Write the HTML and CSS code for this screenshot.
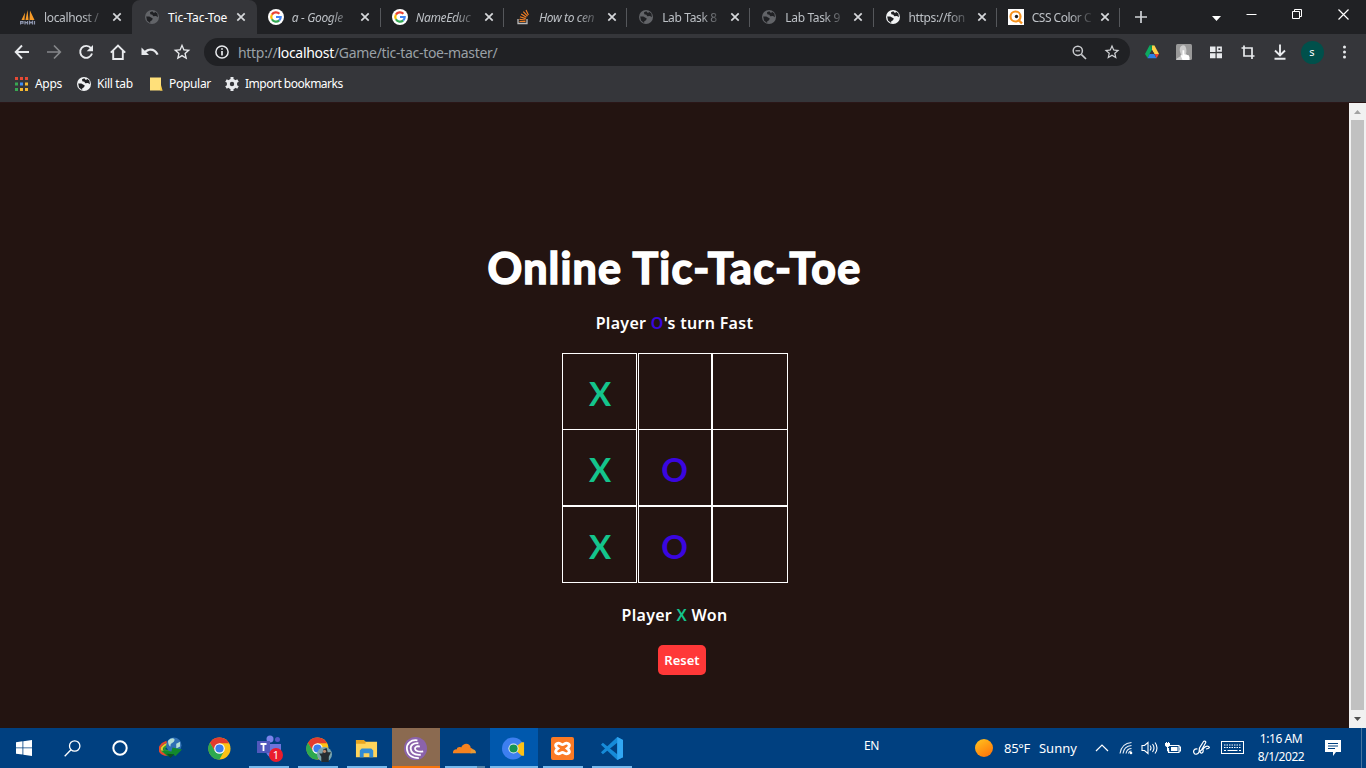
FILE: index.html
```html
<!DOCTYPE html>
<html lang="en">
<head>
<meta charset="utf-8">
<title>Tic-Tac-Toe</title>
<link rel="stylesheet" href="styles.css">
</head>
<body>
<svg class="defs" aria-hidden="true">
  <symbol id="globe" viewBox="0 0 16 16"><circle cx="8" cy="8" r="7" fill="currentColor"/><path d="M2.2 7.4 5.3 7.6 8.8 9.6 8 11.3 6.3 12.2 6.1 13.9 3 11.5ZM8.3 2.2 6 3.2 6.3 5.3 8.4 5.7 9.2 7.3 12 7.1 13.9 8.3 13.4 4.6 11 2.7 10.1 4.3Z" fill="var(--land)"/></symbol>
  <symbol id="google" viewBox="0 0 16 16"><circle cx="8" cy="8" r="8" fill="#fff"/><g fill="none" stroke-width="2.2"><path d="M3.9 5.6A4.7 4.7 0 0 1 11.4 4.8" stroke="#ea4335"/><path d="M3.9 10.3a4.7 4.7 0 0 1 0-4.7" stroke="#fbbc05"/><path d="M11.2 11.4a4.7 4.7 0 0 1-7.3-1.1" stroke="#34a853"/><path d="M8 8h4.7a4.7 4.7 0 0 1-1.5 3.4" stroke="#4285f4"/></g></symbol>
  <symbol id="close" viewBox="0 0 10 10"><path d="m1.3 1.3 7.4 7.4m0-7.4-7.4 7.4" stroke="currentColor" stroke-width="1.7"/></symbol>
  <symbol id="star" viewBox="0 0 24 24"><path d="m22 9.2-7.2-.6L12 2 9.200 8.600 2 9.200l5.500 4.800-1.700 7L12 17.300l6.200 3.700-1.600-7ZM12 15.400l-3.800 2.300 1-4.300-3.300-2.900 4.400-.4L12 6.100l1.700 4 4.400.4-3.300 2.900 1 4.300Z" fill="currentColor"/></symbol>
  <symbol id="chrome" viewBox="0 0 24 24"><circle cx="12" cy="12" r="11.500" fill="#fbc116"/><path d="M2 6A11.500 11.500 0 0 1 22 6.500H12L7.200 14.800Z" fill="#e33b2e"/><path d="M2 6A11.500 11.500 0 0 0 12 23.500l4.800-8.800H7.200Z" fill="#2da94f"/><circle cx="12" cy="12" r="5.500" fill="#fff"/><circle cx="12" cy="12" r="4.300" fill="#3b7ded"/></symbol>
</svg>

<header class="browser">
  <div class="tabstrip">
    <div class="tab first">
      <svg class="fav" viewBox="0 0 16 16"><path d="M1.500 11 5 3.500 4.500 11ZM5.500 11 7.500 1l1 10ZM9.500 11 10 1.500 14.500 11Z" fill="#f89c28"/><path d="M.5 12v3.500M.5 12.500h2.500v1.700H.5M5 12v3.500M5 13.700h2.500M7.500 12v3.500M9.500 15.500V12.500l1.500 1.500 1.500-1.500v3M14.500 12v3.500" fill="none" stroke="#8d95ad" stroke-width="1.200"/></svg>
      <span class="title">localhost /</span><svg class="x"><use href="#close"/></svg>
    </div>
    <div class="tab active">
      <svg class="fav dim"><use href="#globe"/></svg>
      <span class="title full">Tic-Tac-Toe</span><svg class="x"><use href="#close"/></svg>
    </div>
    <div class="tab">
      <svg class="fav"><use href="#google"/></svg>
      <span class="title it">a - Google</span><svg class="x"><use href="#close"/></svg>
    </div>
    <div class="tab sep">
      <svg class="fav"><use href="#google"/></svg>
      <span class="title it">NameEduc</span><svg class="x"><use href="#close"/></svg>
    </div>
    <div class="tab sep">
      <svg class="fav" viewBox="0 0 16 16"><path d="M3 10v4.500h9V10" fill="none" stroke="#bcbbbb" stroke-width="1.300"/><path d="M4.500 12.500h6M4.500 10.300l6 .7M5 7.800l5.700 1.800M6.200 5l5.200 3.200M8.300 2.700l4.200 4.500M11 1l2.400 5" stroke="#f48024" stroke-width="1.200"/></svg>
      <span class="title it">How to cen</span><svg class="x"><use href="#close"/></svg>
    </div>
    <div class="tab sep">
      <svg class="fav dim"><use href="#globe"/></svg>
      <span class="title">Lab Task 8</span><svg class="x"><use href="#close"/></svg>
    </div>
    <div class="tab sep">
      <svg class="fav dim"><use href="#globe"/></svg>
      <span class="title">Lab Task 9</span><svg class="x"><use href="#close"/></svg>
    </div>
    <div class="tab sep">
      <svg class="fav light"><use href="#globe"/></svg>
      <span class="title">https://fon</span><svg class="x"><use href="#close"/></svg>
    </div>
    <div class="tab sep">
      <svg class="fav" viewBox="0 0 16 16"><path d="M0 0h16v16H0z" fill="#fff"/><circle cx="7.500" cy="7.500" r="5" fill="none" stroke="#f7931e" stroke-width="2.200"/><path d="m10 10.500 4 4" stroke="#f7931e" stroke-width="2.400"/><circle cx="8.500" cy="7.500" r="1.700" fill="#222"/></svg>
      <span class="title css">CSS Color C</span><svg class="x"><use href="#close"/></svg>
    </div>
    <div class="newtab sep"><svg width="12" height="12" viewBox="0 0 12 12"><path d="M6 0v12M0 6h12" stroke="#d0d3d6" stroke-width="1.700"/></svg></div>
    <div class="winctl">
      <svg class="arrow" width="9" height="5" viewBox="0 0 9 5"><path d="M0 0h9L4.500 5Z" fill="#fff"/></svg>
      <svg width="11" height="11" viewBox="0 0 11 11"><path d="M.5 5.500h10" stroke="#fff"/></svg>
      <svg width="11" height="11" viewBox="0 0 11 11" fill="none" stroke="#fff"><path d="M.5 2.500h7v7h-7ZM2.500 2.500v-2h7v7h-2"/></svg>
      <svg width="11" height="11" viewBox="0 0 11 11"><path d="m.5.5 10 10m0-10-10 10" stroke="#fff" stroke-width="1.200"/></svg>
    </div>
  </div>

  <div class="toolbar">
    <span class="tool"><svg viewBox="0 0 16 16"><path d="M15 8H2M8 1.500 1.700 8 8 14.500" fill="none" stroke="currentColor" stroke-width="1.900"/></svg></span>
    <span class="tool off"><svg viewBox="0 0 16 16"><path d="M1 8h13M8 1.500 14.300 8 8 14.500" fill="none" stroke="currentColor" stroke-width="1.700"/></svg></span>
    <span class="tool"><svg viewBox="0 0 16 16"><path d="M13 4.200A6 6 0 1 0 14 9.500" fill="none" stroke="currentColor" stroke-width="1.900"/><path d="M15 1v6.300H8.700Z" fill="currentColor"/></svg></span>
    <span class="tool"><svg viewBox="0 0 16 16"><path d="M.8 8.700 8 1.500l7.200 7.200M3.200 7v8h9.600V7" fill="none" stroke="currentColor" stroke-width="1.900"/></svg></span>
    <span class="tool wide"><svg viewBox="0 0 18 16"><path d="M.5 3.500V11H8L5.300 8.300C9 5.300 13.500 6.500 15.600 11l2-.7C15 4.300 8.600 2.800 3.800 6.800Z" fill="currentColor"/></svg></span>
    <span class="tool star"><svg><use href="#star"/></svg></span>
    <div class="omnibox">
      <svg width="14" height="14" viewBox="0 0 14 14"><circle cx="7" cy="7" r="6.100" fill="none" stroke="#e8eaed" stroke-width="1.500"/><path d="M7 6v4.500M7 3.200v1.600" stroke="#e8eaed" stroke-width="1.700"/></svg>
      <span class="url">http://<b>localhost</b>/Game/tic-tac-toe-master/</span>
      <svg width="15" height="15" viewBox="0 0 15 15" fill="none" stroke="#c8cacd"><circle cx="5.800" cy="5.800" r="4.600" stroke-width="1.500"/><path d="m9.300 9.300 4.700 4.700" stroke-width="1.700"/><path d="M3.500 5.800h4.600" stroke-width="1.200"/></svg>
      <svg class="fave" width="18" height="18"><use href="#star"/></svg>
    </div>
    <span class="tool"><svg viewBox="0 0 16 16"><path d="M5.500 1.500h5L8 6 3.600 14 1 10Z" fill="#0da960"/><path d="M5.500 1.500H8L10.500 6 8 6Z" fill="#0b8f50"/><path d="M8 1.500h2.500L15 10h-4.600L8 6Z" fill="#ffcf48"/><path d="M10.500 10H15l-2.500 4.300Z" fill="#ea4335"/><path d="M5.700 10h4.500l2.300 4.300h-9Z" fill="#2d7fe8"/><path d="m8 6 2.300 4H5.700Z" fill="#35363a"/></svg></span>
    <span class="tool"><svg viewBox="0 0 16 16"><rect width="16" height="16" rx="1.500" fill="#999"/><path d="M0 16c1-3 5-3 5-5S3 7 4 4s5-4 6 0 0 5 0 6l4 3v3Z" fill="#ccc"/><path d="M6.500 16 4.500 11l2 .5V6.300h1.800v4L13 11.500V16Z" fill="#fff"/></svg></span>
    <span class="tool"><svg viewBox="0 0 16 16"><path d="M2 2.500h5.500V8H2ZM2 9.200h5.500v5H2ZM8.700 9.200H14v5H8.700Z" fill="currentColor"/><path d="M9.600 3.400h3.500v3.500H9.600Z" fill="none" stroke="currentColor" stroke-width="1.600"/></svg></span>
    <span class="tool"><svg viewBox="0 0 16 16"><path d="M1.500 4H12v8M4 1.500V12h10.500M12 12v3" fill="none" stroke="currentColor" stroke-width="1.700"/></svg></span>
    <span class="tool"><svg viewBox="0 0 16 16"><path d="M8 .5V11M3 6.500l5 5 5-5M2.500 14.700h11" fill="none" stroke="currentColor" stroke-width="1.900"/></svg></span>
    <span class="tool"><span class="avatar">s</span></span>
    <span class="tool"><svg viewBox="0 0 16 16" fill="currentColor"><circle cx="8.500" cy="3" r="1.500"/><circle cx="8.500" cy="8" r="1.500"/><circle cx="8.500" cy="13" r="1.500"/></svg></span>
  </div>

  <div class="bookmarks">
    <span class="bm apps"><svg width="13" height="14" viewBox="0 0 13 14"><path d="M0 0h3v3H0zM5 0h3v3H5zM10 0h3v3h-3z" fill="#e64a35"/><path d="M0 5.500h3v3H0z" fill="#39a852"/><path d="M5 5.500h3v3H5z" fill="#3f8df5"/><path d="M10 5.500h3v3h-3zM5 11h3v3H5zM10 11h3v3h-3z" fill="#f5b932"/><path d="M0 11h3v3H0z" fill="#39a852"/></svg>Apps</span>
    <span class="bm kill"><svg class="fav light"><use href="#globe"/></svg>Kill tab</span>
    <span class="bm popular"><svg width="13" height="14" viewBox="0 0 13 14"><path d="M0 .5h11v10l1.500 3H0Z" fill="#ffe07a"/><path d="m11 8 1.500 5.500H10Z" fill="#f6c944"/></svg>Popular</span>
    <span class="bm import"><svg width="14" height="14" viewBox="0 0 14 14"><circle cx="7" cy="7" r="3.700" fill="none" stroke="#e8eaed" stroke-width="3"/><path d="M7 0v3m0 8v3M1 3.500l2.500 1.500m7 4 2.500 1.500M1 10.500 3.500 9m7-4L13 3.500" stroke="#e8eaed" stroke-width="3"/></svg>Import bookmarks</span>
  </div>
</header>

<div class="viewport">
  <main class="game">
    <h1>Online Tic-Tac-Toe</h1>
    <p class="turn">Player <span class="o">O</span>'s turn Fast</p>
    <div class="board">
      <div class="cell top px">X</div><div class="cell top"></div><div class="cell top"></div>
      <div class="cell px">X</div><div class="cell o">O</div><div class="cell"></div>
      <div class="cell px">X</div><div class="cell o">O</div><div class="cell"></div>
    </div>
    <p class="won">Player <span class="px">X</span> Won</p>
    <button class="reset">Reset</button>
  </main>
  <div class="scrollbar">
    <svg width="17" height="17" viewBox="0 0 17 17"><path d="M5 11h7L8.500 7Z" fill="#a3a3a3"/></svg>
    <div class="thumb"></div>
    <svg width="17" height="17" viewBox="0 0 17 17"><path d="M5 6h7l-3.500 4Z" fill="#505050"/></svg>
  </div>
</div>

<footer class="taskbar">
  <div class="sys">
    <span><svg width="16" height="16" viewBox="0 0 16 16"><path d="M0 2.300 6.500 1.300v6.200H0ZM7.300 1.200 16 0v7.500H7.300ZM0 8.300h6.500v6.300L0 13.700ZM7.300 8.300H16V16l-8.700-1.200Z" fill="#fff"/></svg></span>
    <span><svg width="17" height="17" viewBox="0 0 17 17" fill="none" stroke="#fff" stroke-width="1.300"><circle cx="10.700" cy="6" r="5.200"/><path d="M7 9.800.7 16.200"/></svg></span>
    <span><svg width="16" height="16" viewBox="0 0 16 16"><circle cx="8" cy="8" r="6.700" fill="none" stroke="#fff" stroke-width="2"/></svg></span>
  </div>
  <div class="apps-row">
    <span class="app"><svg viewBox="0 0 24 24"><g fill="none" stroke-width="2.200"><path d="M8 5C2 7-1 12 1.500 15.500S9 19 14 18" stroke="#e9482c"/><path d="M9 7C4 9 1.500 12 3.500 14.500S9 17 14 16" stroke="#e5cf27"/><path d="M10 9c-4 1-5.500 3-4 4.500S10 15 14 14" stroke="#239b37"/></g><circle cx="15.500" cy="8.500" r="8" fill="#2f6fb5"/><path d="M9.500 4c3-4 8-3 6.500 0s-4 2-4 5-3-2-2.500-5ZM18 7l4-2v5l-4 2Z" fill="#b5dfd5"/><path d="m2 14 11 1 1-4 10 2-7 7-2-2-6 2Z" fill="#128a2c"/><path d="m8 17.500 8 .5-4 4Z" fill="#0d4f22"/></svg></span>
    <span class="app"><svg><use href="#chrome"/></svg></span>
    <span class="app open"><svg class="teams" viewBox="0 0 26 26"><circle cx="14" cy="4" r="3.500" fill="#7b83eb"/><circle cx="21.500" cy="4.500" r="2.500" fill="#5059c9"/><path d="M10 9h15v7a6 6 0 0 1-5 6h-6a7 7 0 0 1-4-6Z" fill="#6d74dc"/><path d="M1 6h13v12H1Z" fill="#5158bc"/><path d="M4.500 9h6M7.500 9v7" stroke="#fff" stroke-width="1.800"/></svg><span class="badge">1</span></span>
    <span class="app open"><svg><use href="#chrome"/></svg><svg class="profile" viewBox="0 0 14 14"><circle cx="7" cy="7" r="7" fill="#79a4ae"/><path d="M4 14V9L2 6h3l1-4 3-1 1 4h3l-2 4v5Z" fill="#252d31"/><circle cx="7" cy="4" r="1.500" fill="#bd8d71"/></svg></span>
    <span class="app open"><svg viewBox="0 0 24 24"><path d="M1 3h8l2 2h12v16H1Z" fill="#ffd45b"/><path d="M1 3h8l2 2v2H1Z" fill="#e9a520"/><path d="M5 21v-7l2-2h10l2 2v7h-4v-4H9v4Z" fill="#318bd5"/></svg></span>
    <span class="app orange"><svg viewBox="0 0 24 24"><circle cx="12" cy="12" r="12" fill="#8b63ab"/><path d="M14 3.500C7 2.500 2.500 7 3 12.500S8 22 15.500 22M15 6.500c-5-.5-8.500 2-8 6s4 6.500 10.500 6M16.500 10c-3-1-5.500.5-5 2.500s4 3.500 8.500 2.500" fill="none" stroke="#fff" stroke-width="1.900"/></svg></span>
    <span class="app open split"><svg class="cloud" viewBox="0 0 24 24"><path d="M0 17c-.5-3 2-4.500 4-4 0-2.500 3-3 4.500-2 2.500-6 10-4.500 10 .5 3 .500 2.500 3 1.500 5.500Z" fill="#f6821f"/><path d="m18 17 1-4c3-.5 5 1 5 4Z" fill="#e89a35"/></svg></span>
    <span class="app focus"><svg viewBox="0 0 24 24"><circle cx="11.500" cy="12" r="11.500" fill="#3d7ff0"/><path d="m12 12 8.500-6.500H23v14h-2.500Z" fill="#fbc116"/><circle cx="12" cy="12" r="5.300" fill="#e3ecfb"/><circle cx="12" cy="12" r="4.300" fill="#149455"/></svg></span>
    <span class="app open"><svg viewBox="0 0 24 24"><rect width="24" height="24" rx="2" fill="#fb7a24"/><path d="M6 7c3-2 4 1 6 1s3-3 6-1-1 5-1 5 4 3 1 5-4-1-6-1-3 3-6 1 1-5 1-5-4-3-1-5Z" fill="none" stroke="#fff" stroke-width="3"/></svg></span>
    <span class="app open"><svg viewBox="0 0 24 24"><path d="m18 0 6 3v18l-6 3L1 8l2-2 15 12V6L3 18l-2-2Z" fill="#168bd8"/><path d="m18 0 6 3v18l-6 3Z" fill="#31a7f3"/></svg></span>
  </div>
  <span class="lang">EN</span>
  <div class="tray">
    <svg class="sun" width="18" height="18" viewBox="0 0 18 18"><defs><linearGradient id="sg" x1="0" y1="0" x2=".6" y2="1"><stop stop-color="#ffc51f"/><stop offset="1" stop-color="#ff7a0b"/></linearGradient></defs><circle cx="9" cy="9" r="9" fill="url(#sg)"/></svg>
    <span class="weather">85°F<span>Sunny</span></span>
    <svg width="48" height="16" viewBox="0 0 48 16"><path d="m18 11 6-6 6 6" fill="none" stroke="#fff" stroke-width="1.200"/></svg>
    <svg class="signal" width="14" height="14" viewBox="0 0 14 14" fill="none" stroke="#e5edf5" stroke-width="1.100"><path d="M1 12.500C2 6 6 2 12.500 1.500M4 12.500c.5-4.500 3.500-7.500 8.500-8M7 12.500c.5-2.500 2.500-5 5.500-5M9.500 12.500q.5-2.500 3-2.500"/><circle cx="12" cy="12" r="1.300" fill="#fff" stroke="none"/></svg>
    <svg class="volume" width="17" height="14" viewBox="0 0 17 14" fill="none" stroke="#fff" stroke-width="1.100"><path d="M1 4.500h2.500L7 1.500v11L3.500 9.500H1ZM9 4.500q2 2.500 0 5M11.500 3q3 4 0 8M14 1.500q4 5.500 0 11"/></svg>
    <svg class="battery" width="16" height="12" viewBox="0 0 16 12"><path d="M4 3.500h10v7H3.500V6M14 5h1.500v4H14" fill="none" stroke="#fff" stroke-width="1.100"/><path d="M6 5h6.500v4H6ZM0 1h5v2.500L3.500 5h-2L0 3.500Z" fill="#fff"/><path d="M1.500 0v2m2-2v2m-1 3v4h2" stroke="#fff" fill="none"/></svg>
    <svg class="pen" width="17" height="16" viewBox="0 0 17 16" fill="none" stroke="#fff" stroke-width="1.200"><path d="m6 12 .5-4L10.500 1.500c1-1 3 0 2 1.500L8.500 10ZM4.500 9C1 8.500 0 11 1 13s4 1.500 5-1 1 2 3 1 1-2 1-4q3-4 5.500-2.500T13 9"/></svg>
    <svg class="keyboard" width="23" height="14" viewBox="0 0 23 14"><rect x=".5" y=".5" width="22" height="12" fill="none" stroke="#fff"/><path d="M3 4h17M3 6.500h17" stroke="#fff" stroke-dasharray="1.500 1"/><path d="M3 9.500h2m1.500 0h10m1.500 0h2" stroke="#fff"/></svg>
    <div class="clock">1:16 AM<br>8/1/2022</div>
    <svg class="notice" width="16" height="16" viewBox="0 0 16 16"><path d="M0 0h16v12h-5l-3 4v-4H0Z" fill="#fff"/><path d="M3 3.500h10M3 6h10M3 8.500h7" stroke="#004080"/></svg>
    <span class="peek"></span>
  </div>
</footer>
</body>
</html>
```
FILE: styles.css
```css
* { box-sizing: border-box; }

body {
  margin: 0;
  width: 1366px;
  height: 768px;
  overflow: hidden;
  display: flex;
  flex-direction: column;
  background: #231411;
  font-family: "Noto Sans", "Open Sans", sans-serif;
  font-size: 12px;
}

svg { display: block; flex: none; }
.defs { position: absolute; width: 0; height: 0; }

/* Browser chrome */
.browser { height: 103px; flex: none; background: #35363a; border-bottom: 1px solid #2a1617; }

.tabstrip { display: flex; height: 34px; padding-left: 9px; background: #202124; }
.tab { width: 123.2px; display: flex; align-items: center; padding-left: 12px; color: #bdc1c6; flex: none; }
.tab.first { width: 123px; padding-left: 11px; }
.tab.active { width: 124.8px; background: #35363a; color: #fff; border-radius: 8px 8px 0 0; }
.tab.active + .tab { width: 123px; padding-left: 11px; }
.fav { width: 16px; height: 16px; --land: #202124; }
.fav.dim { color: #626468; }
.fav.light { color: #f1f3f4; }
.title {
  width: 63px;
  margin-left: 8px;
  white-space: nowrap;
  letter-spacing: -0.35px;
  -webkit-mask-image: linear-gradient(90deg, #000 60%, transparent);
  mask-image: linear-gradient(90deg, #000 60%, transparent);
}
.title.full { letter-spacing: -0.1px; -webkit-mask-image: none; mask-image: none; }
.title.css { letter-spacing: -0.5px; }
.title.it { font-style: italic; }
.x { width: 10px; height: 10px; margin-left: 5px; color: #d5d7da; }
.sep { background: linear-gradient(#55575b, #55575b) 0 8px / 1px 19px no-repeat; }
.newtab { width: 48px; display: flex; align-items: center; justify-content: center; padding-right: 3px; }
.winctl { display: flex; align-items: flex-start; margin-left: auto; gap: 35px; padding: 9px 17px 0 0; }
.winctl .arrow { margin: 7px -10px 0 0; }

.toolbar { display: flex; align-items: center; height: 36px; padding: 0 6px; color: #e8eaed; }
.tool { width: 32px; display: flex; justify-content: center; flex: none; }
.tool svg { width: 16px; height: 16px; }
.tool.wide svg { width: 18px; height: 18px; }
.tool.star svg { width: 20px; height: 20px; }
.tool.off { color: #85878a; }
.omnibox {
  flex: 1;
  height: 28px;
  margin: 0 6px;
  padding: 0 9px 0 11px;
  border-radius: 14px;
  background: #202124;
  display: flex;
  align-items: center;
}
.url { flex: 1; margin-left: 9px; font-size: 14px; color: #9aa0a6; letter-spacing: -0.3px; white-space: nowrap; }
.url b { font-weight: 400; color: #fff; }
.fave { margin-left: 16px; color: #d0d2d5; }
.avatar { width: 23px; height: 23px; border-radius: 50%; background: #00504b; color: #fff; text-align: center; line-height: 22px; font-size: 11px; }

.bookmarks { display: flex; align-items: center; height: 28px; padding-left: 15px; color: #fff; }
.bm { display: flex; align-items: center; white-space: nowrap; letter-spacing: -0.3px; line-height: 16px; padding-bottom: 1px; }
.bm.apps { width: 61px; gap: 7px; }
.bm.kill { width: 74px; gap: 5px; }
.bm.popular { width: 75px; gap: 6px; }
.bm.import { gap: 6px; letter-spacing: -0.5px; }

/* Page */
.viewport { height: 625px; display: flex; flex: none; }
.game {
  flex: 1;
  display: flex;
  flex-direction: column;
  align-items: center;
  padding-top: 136px;
  font-family: Lato, "Noto Sans", sans-serif;
  font-weight: 700;
  color: #fff;
}
h1 {
  margin: 0;
  height: 58px;
  line-height: 58px;
  font-size: 43px;
  font-weight: 700;
  letter-spacing: 1.2px;
  -webkit-text-stroke: 1.600px #fff;
  stroke-linejoin: round;
  white-space: nowrap;
}
p { margin: 0; font-family: "Noto Sans", sans-serif; font-size: 16px; font-weight: 600; line-height: 24px; letter-spacing: 0.3px; white-space: nowrap; }
.turn { margin-top: 14px; }
.o { color: #3a06e0; }
.px { color: #14c48c; }
.board { display: grid; width: 226px; grid-template-columns: 75px 74px 76px; grid-template-rows: 76px 77px 77px; margin-top: 18px; }
.cell { border: 1px solid #fff; display: flex; align-items: center; justify-content: center; font-size: 33px; padding-top: 3px; }
.cell.px { padding-left: 2px; }
.cell.top { border-bottom: 0; }
.cell:nth-child(3n + 2), .cell:nth-child(3n) { margin-left: 1px; margin-right: -1px; }
.won { margin-top: 20px; }
.reset {
  width: 48px;
  height: 30px;
  margin: 18px 0 0 15px;
  padding: 0;
  border: 0;
  border-radius: 5px;
  background: #ff3838;
  color: #fff;
  font: 600 13px "Noto Sans", sans-serif;
}

.scrollbar { width: 17px; background: #f1f1f1; display: flex; flex-direction: column; }
.thumb { flex: 1; margin: 0 2px 1px; background: #c1c1c1; }

/* Taskbar */
.taskbar { height: 40px; flex: none; display: flex; background: #004080; color: #fff; }
.sys { display: flex; width: 147px; }
.sys span { width: 48px; display: flex; align-items: center; justify-content: center; }
.apps-row { display: flex; gap: 1px; }
.app { width: 48px; height: 40px; position: relative; display: flex; align-items: center; justify-content: center; padding-right: 1px; }
.app svg { width: 23px; height: 23px; }
.app svg.teams { width: 26px; height: 26px; }
.open { background: linear-gradient(#76b9ed, #76b9ed) 4px 38px / 40px 2px no-repeat; }
.split { background: linear-gradient(90deg, #76b9ed 32px, #5484a9 32px) 4px 38px / 40px 2px no-repeat; }
.orange { background: #8b6a50; border-bottom: 2px solid #f7740b; padding-top: 2px; }
.focus { background: #0058ad; border-bottom: 2px solid #76b9ed; padding-top: 2px; }
.badge { position: absolute; left: 24px; top: 20px; width: 14px; height: 14px; border-radius: 50%; background: #ea1c2c; font-size: 11px; line-height: 14px; text-align: center; }
.app svg.profile { position: absolute; left: 23px; top: 19px; width: 15px; height: 15px; }
.lang { margin-left: 228px; width: 16px; line-height: 35px; letter-spacing: -0.5px; }
.tray { display: flex; align-items: center; margin-left: 95px; }
.weather { width: 74px; margin-left: 11px; font-size: 13px; white-space: nowrap; letter-spacing: -0.3px; }
.weather span { margin-left: 9px; letter-spacing: 0; }
.signal { margin-left: -7px; }
.volume { margin-left: 8px; }
.battery { margin-left: 7px; }
.pen { margin-left: 12px; }
.keyboard { margin-left: 11px; }
.clock { width: 60px; margin-left: 7px; text-align: center; line-height: 18px; letter-spacing: -0.45px; padding-bottom: 1px; }
.notice { margin-left: 14px; }
.peek { width: 1px; height: 40px; margin-left: 20px; background: #47749f; }
```
